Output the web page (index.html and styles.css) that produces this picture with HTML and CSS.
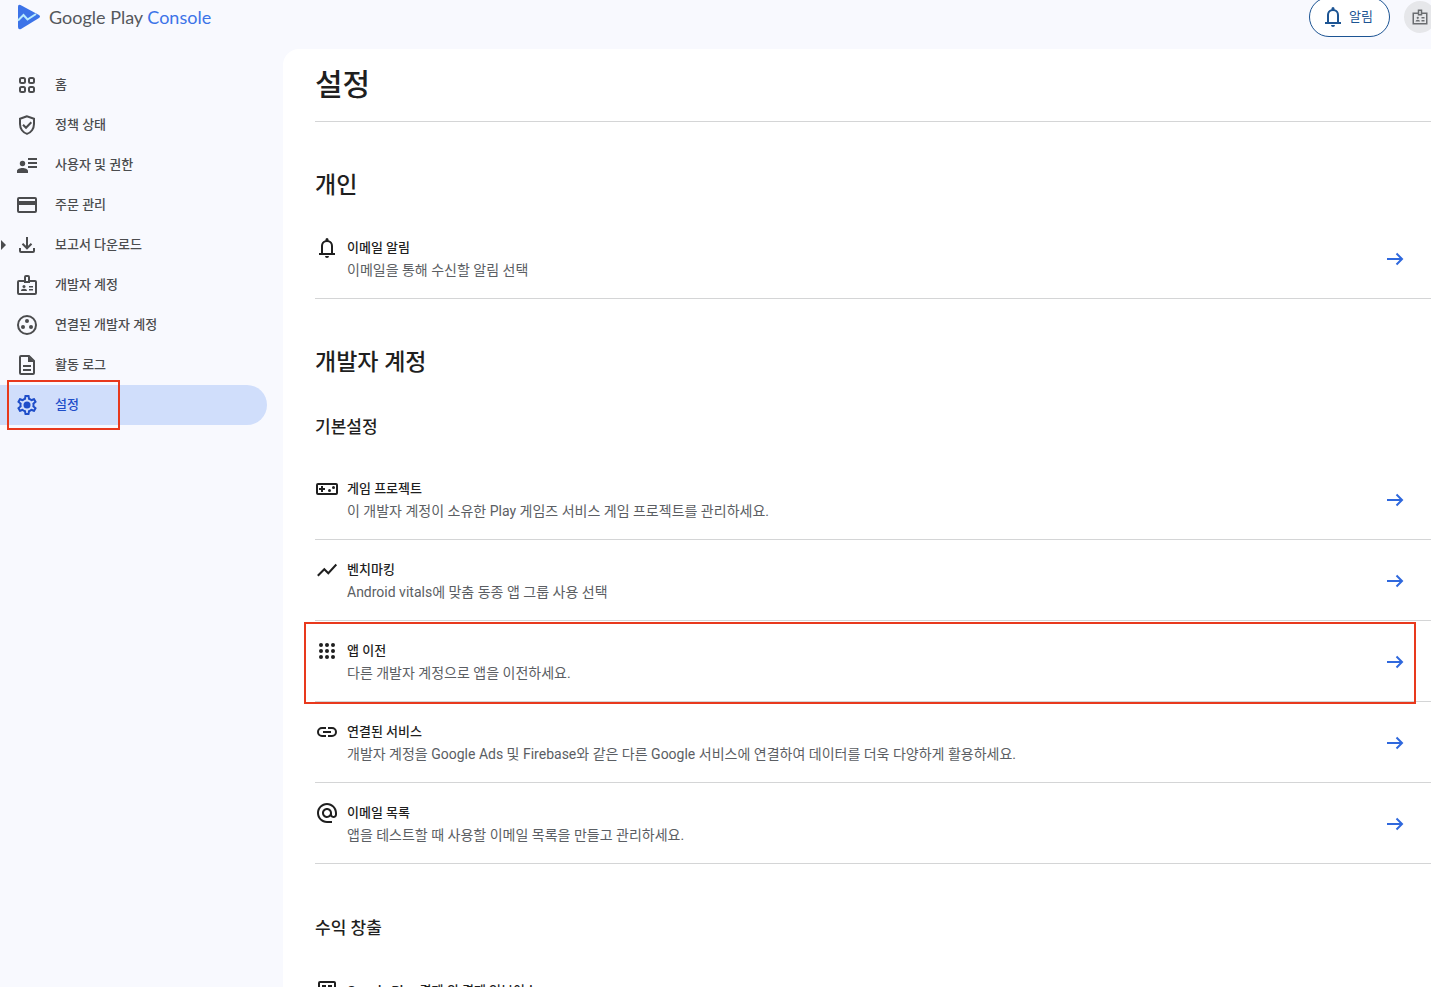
FILE: index.html
```
<!DOCTYPE html>
<html lang="ko">
<head>
  <meta charset="UTF-8">
  <title>설정 | Google Play Console</title>
  <meta name="viewport" content="width=device-width, initial-scale=1.0">
  <link rel="stylesheet" href="styles.css">
</head>
<body>

<header class="topbar">
  <a class="logo" href="#">
    <svg class="logo-mark" viewBox="0 0 24 26">
      <path fill="#3c73e8" d="M1 2.500Q1 0 3.500 1L22 11Q24 12.500 22 14L4 25Q1 26 1 23z"/>
      <path fill="none" stroke="#b9ecfd" stroke-width="2" d="M1 16.500 6.500 11l4 4.500L19 10"/>
    </svg>
    <span class="logo-text">Google Play <span class="logo-console">Console</span></span>
  </a>
  <div class="topbar-actions">
    <button class="alert-button" type="button">
      <svg class="icon" viewBox="0 0 24 24"><path d="M4 19v-2h2v-7c0-2.800 1.700-5.100 4.500-5.800V3.500a1.500 1.500 0 0 1 3 0v.7C16.300 4.900 18 7.200 18 10v7h2v2zm4-2h8v-7a4 4 0 0 0-8 0zM10 20h4a2 2 0 0 1-4 0z"/></svg>
      알림
    </button>
    <button class="avatar" type="button" aria-label="계정">
      <svg viewBox="0 0 24 24"><path class="line" d="M9 7H3v14h18V7h-6M10 3h4v6h-4zM14 13h4M14 17h4"/><circle cx="9" cy="13" r="1.500"/><path d="M6 18q0-2.500 3-2.500t3 2.500z"/></svg>
    </button>
  </div>
</header>

<div class="layout">
  <nav class="sidebar">
    <a class="nav-item" href="#">
      <svg class="icon" viewBox="0 0 24 24"><g class="line"><rect x="5" y="5" width="5" height="5" rx="1.500"/><rect x="14" y="5" width="5" height="5" rx="1.500"/><rect x="5" y="14" width="5" height="5" rx="1.500"/><rect x="14" y="14" width="5" height="5" rx="1.500"/></g></svg>
      홈
    </a>
    <a class="nav-item" href="#">
      <svg class="icon" viewBox="0 0 24 24"><path class="line" d="M12 3.200 5 5.800v5.300c0 4.500 2.900 8.600 7 9.800 4.100-1.200 7-5.300 7-9.800V5.800zM8 11.800l3 3 5.300-5.500"/></svg>
      정책 상태
    </a>
    <a class="nav-item" href="#">
      <svg class="icon" viewBox="0 0 24 24"><circle cx="7.500" cy="10.500" r="2.700"/><path d="M2 20v-2c0-2 3-3 5.500-3s5.500 1 5.500 3v2zM13 5h9v2h-9zM13 9h9v2h-9zM13 13h9v2h-9z"/></svg>
      사용자 및 권한
    </a>
    <a class="nav-item" href="#">
      <svg class="icon" viewBox="0 0 24 24"><rect class="line" x="3" y="5" width="18" height="14" rx="1"/><path d="M3 8h18v4H3z"/></svg>
      주문 관리
    </a>
    <a class="nav-item expandable" href="#">
      <svg class="icon" viewBox="0 0 24 24"><path class="line" d="M12 4v11M7.500 10.800l4.500 4.500 4.500-4.500M5 15v3q0 1 1 1h12q1 0 1-1v-3"/></svg>
      보고서 다운로드
    </a>
    <a class="nav-item" href="#">
      <svg class="icon" viewBox="0 0 24 24"><path class="line" d="M9 8H4q-1 0-1 1v11q0 1 1 1h16q1 0 1-1V9q0-1-1-1h-5M10 4q0-1 1-1h2q1 0 1 1v5h-4z"/><circle cx="9" cy="13.500" r="1.500"/><path d="M6 18q0-2.300 3-2.300t3 2.300zM14 13h4v1.500h-4zM14 16h4v1.500h-4z"/></svg>
      개발자 계정
    </a>
    <a class="nav-item" href="#">
      <svg class="icon" viewBox="0 0 24 24"><circle class="line" cx="12" cy="12" r="9"/><circle cx="12" cy="8" r="2"/><circle cx="8" cy="14" r="2"/><circle cx="16" cy="14" r="2"/></svg>
      연결된 개발자 계정
    </a>
    <a class="nav-item" href="#">
      <svg class="icon" viewBox="0 0 24 24"><path class="line" d="M14 3H6Q5 3 5 4v16q0 1 1 1h12q1 0 1-1V8zM8 13h8M8 17h8"/><path d="M13 3v6h6z"/></svg>
      활동 로그
    </a>
    <a class="nav-item active marked" href="#" aria-current="page">
      <svg class="icon" viewBox="0 0 24 24"><path d="M19.430 12.980c.04-.32.07-.64.07-.98 0-.34-.03-.66-.07-.98l2.110-1.650c.19-.15.24-.42.12-.64l-2-3.460c-.09-.16-.26-.25-.44-.25-.06 0-.12.010-.17.030l-2.490 1c-.52-.4-1.080-.73-1.690-.98l-.38-2.650C14.460 2.180 14.250 2 14 2h-4c-.25 0-.46.18-.49.42l-.38 2.650c-.61.25-1.170.59-1.690.98l-2.490-1c-.06-.02-.12-.03-.18-.03-.17 0-.34.09-.43.25l-2 3.460c-.13.22-.07.49.12.64l2.110 1.650c-.04.32-.07.65-.07.98 0 .33.03.66.07.98l-2.110 1.650c-.19.15-.24.42-.12.64l2 3.460c.09.16.26.25.44.25.06 0 .12-.01.17-.03l2.490-1c.52.4 1.080.73 1.690.98l.38 2.650c.03.24.24.42.49.42h4c.25 0 .46-.18.49-.42l.38-2.650c.61-.25 1.170-.59 1.690-.98l2.490 1c.06.02.12.03.18.03.17 0 .34-.09.43-.25l2-3.460c.12-.22.07-.49-.12-.64zM17.450 11.270c.04.31.05.52.05.73 0 .21-.02.43-.05.73l-.14 1.130.89.7 1.080.84-.7 1.210-1.270-.51-1.040-.42-.9.68c-.43.32-.84.56-1.250.73l-1.060.43-.16 1.130-.2 1.350h-1.400l-.19-1.350-.16-1.130-1.060-.43c-.43-.18-.83-.41-1.230-.71l-.91-.7-1.060.43-1.270.51-.7-1.210 1.080-.84.89-.7-.14-1.130c-.03-.31-.05-.54-.05-.74s.02-.43.05-.73l.14-1.130-.89-.7-1.080-.84.7-1.210 1.270.51 1.040.42.9-.68c.43-.32.84-.56 1.250-.73l1.060-.43.16-1.130.2-1.350h1.390l.19 1.350.16 1.130 1.060.43c.43.18.83.41 1.230.71l.91.7 1.060-.43 1.270-.51.7 1.210-1.070.85-.89.7z" fill-rule="evenodd"/><circle cx="12" cy="12" r="3.500"/></svg>
      설정
    </a>
  </nav>

  <main class="content">
    <h1>설정</h1>

    <section>
      <h2>개인</h2>
      <a class="row" href="#">
        <svg class="icon" viewBox="0 0 24 24"><path d="M4 19v-2h2v-7c0-2.800 1.700-5.100 4.500-5.800V3.500a1.500 1.500 0 0 1 3 0v.7C16.300 4.900 18 7.200 18 10v7h2v2zm4-2h8v-7a4 4 0 0 0-8 0zM10 20h4a2 2 0 0 1-4 0z"/></svg>
        <span class="row-text">
          <span class="row-title">이메일 알림</span>
          <span class="row-desc">이메일을 통해 수신할 알림 선택</span>
        </span>
        <svg class="icon arrow" viewBox="0 0 24 24"><path class="line" d="M4 12h15M13.500 6.500 19 12l-5.500 5.500"/></svg>
      </a>
    </section>

    <section>
      <h2>개발자 계정</h2>
      <h3>기본설정</h3>
      <a class="row" href="#">
        <svg class="icon" viewBox="0 0 24 24"><rect class="line" x="2" y="7" width="20" height="10" rx="1"/><path d="M6 9h2v2h2v2H8v2H6v-2H4v-2h2z"/><circle cx="14.500" cy="13.500" r="1.500"/><circle cx="18.500" cy="10.500" r="1.500"/></svg>
        <span class="row-text">
          <span class="row-title">게임 프로젝트</span>
          <span class="row-desc">이 개발자 계정이 소유한 Play 게임즈 서비스 게임 프로젝트를 관리하세요.</span>
        </span>
        <svg class="icon arrow" viewBox="0 0 24 24"><path class="line" d="M4 12h15M13.500 6.500 19 12l-5.500 5.500"/></svg>
      </a>
      <a class="row" href="#">
        <svg class="icon" viewBox="0 0 24 24"><path class="line" d="M2.800 17.700 9.300 11.200l4 4L21.300 6.500"/></svg>
        <span class="row-text">
          <span class="row-title">벤치마킹</span>
          <span class="row-desc">Android vitals에 맞춤 동종 앱 그룹 사용 선택</span>
        </span>
        <svg class="icon arrow" viewBox="0 0 24 24"><path class="line" d="M4 12h15M13.500 6.500 19 12l-5.500 5.500"/></svg>
      </a>
      <a class="row marked" href="#">
        <svg class="icon" viewBox="0 0 24 24"><circle cx="6" cy="6" r="2"/><circle cx="12" cy="6" r="2"/><circle cx="18" cy="6" r="2"/><circle cx="6" cy="12" r="2"/><circle cx="12" cy="12" r="2"/><circle cx="18" cy="12" r="2"/><circle cx="6" cy="18" r="2"/><circle cx="12" cy="18" r="2"/><circle cx="18" cy="18" r="2"/></svg>
        <span class="row-text">
          <span class="row-title">앱 이전</span>
          <span class="row-desc">다른 개발자 계정으로 앱을 이전하세요.</span>
        </span>
        <svg class="icon arrow" viewBox="0 0 24 24"><path class="line" d="M4 12h15M13.500 6.500 19 12l-5.500 5.500"/></svg>
      </a>
      <a class="row" href="#">
        <svg class="icon" viewBox="0 0 24 24"><path class="line" d="M11 8H7a4 4 0 0 0 0 8h4M13 8h4a4 4 0 0 1 0 8h-4M8 12h8"/></svg>
        <span class="row-text">
          <span class="row-title">연결된 서비스</span>
          <span class="row-desc">개발자 계정을 Google Ads 및 Firebase와 같은 다른 Google 서비스에 연결하여 데이터를 더욱 다양하게 활용하세요.</span>
        </span>
        <svg class="icon arrow" viewBox="0 0 24 24"><path class="line" d="M4 12h15M13.500 6.500 19 12l-5.500 5.500"/></svg>
      </a>
      <a class="row" href="#">
        <svg class="icon" viewBox="0 0 24 24"><path d="M12 2C6.480 2 2 6.480 2 12s4.480 10 10 10h5v-2h-5c-4.340 0-8-3.660-8-8s3.660-8 8-8 8 3.660 8 8v1.430c0 .79-.71 1.570-1.500 1.570s-1.500-.78-1.500-1.570V12c0-2.760-2.240-5-5-5s-5 2.240-5 5 2.240 5 5 5c1.380 0 2.640-.56 3.540-1.470.65.89 1.770 1.470 2.960 1.470 1.970 0 3.500-1.600 3.500-3.570V12c0-5.520-4.480-10-10-10zm0 13c-1.660 0-3-1.340-3-3s1.340-3 3-3 3 1.340 3 3-1.340 3-3 3z"/></svg>
        <span class="row-text">
          <span class="row-title">이메일 목록</span>
          <span class="row-desc">앱을 테스트할 때 사용할 이메일 목록을 만들고 관리하세요.</span>
        </span>
        <svg class="icon arrow" viewBox="0 0 24 24"><path class="line" d="M4 12h15M13.500 6.500 19 12l-5.500 5.500"/></svg>
      </a>

      <h3>수익 창출</h3>
      <a class="row" href="#">
        <svg class="icon" viewBox="0 0 24 24"><path class="line" d="M4 22V5q0-1 1-1h14q1 0 1 1v17z"/><path d="M7 7h4v2H7zM13 7h4v2h-4z"/></svg>
        <span class="row-text">
          <span class="row-title">Google Play 결제 외 결제 인보이스</span>
        </span>
      </a>
    </section>
  </main>
</div>

</body>
</html>
```
FILE: styles.css
```
*,
*::before,
*::after {
  box-sizing: border-box;
}
body {
  margin: 0;
  height: 100vh;
  display: flex;
  flex-direction: column;
  overflow: hidden;
  background: #f8f9fe;
  color: #1f1f1f;
  font-family: Roboto, 'Noto Sans CJK KR', sans-serif;
  font-size: 13px;
  line-height: 22px;
}
a {
  color: inherit;
  text-decoration: none;
}
.icon {
  width: 24px;
  height: 24px;
  flex-shrink: 0;
}
svg {
  fill: currentColor;
}
.line {
  fill: none;
  stroke: currentColor;
  stroke-width: 2;
}

.topbar {
  flex-shrink: 0;
  display: flex;
  align-items: center;
  justify-content: space-between;
  height: 64px;
  margin-top: -15px;
  margin-right: -5px;
  padding-left: 17px;
}
.logo {
  display: flex;
  align-items: center;
  gap: 8px;
}
.logo-mark {
  width: 24px;
  height: 26px;
}
.logo-text {
  font-family: Lato, sans-serif;
  font-size: 18px;
  color: #55585c;
}
.logo-console {
  color: #3c73e8;
}
.topbar-actions {
  display: flex;
  align-items: center;
  gap: 14px;
}
.alert-button {
  display: flex;
  align-items: center;
  gap: 4px;
  height: 40px;
  padding: 0 16px 0 11px;
  border: 1px solid #1c5493;
  border-radius: 20px;
  background: #fff;
  color: #1c5493;
  font: inherit;
}
.avatar {
  display: flex;
  align-items: center;
  justify-content: center;
  width: 32px;
  height: 32px;
  padding: 0;
  border: none;
  border-radius: 50%;
  background: #e6e7ea;
  color: #6a6d70;
}
.avatar svg {
  width: 18px;
  height: 18px;
}

.layout {
  flex: 1;
  display: flex;
  min-height: 0;
}
.sidebar {
  width: 283px;
  flex-shrink: 0;
  padding: 16px 16px 0 0;
  color: #4b4c4e;
  font-weight: 500;
}
.nav-item {
  position: relative;
  display: flex;
  align-items: center;
  gap: 16px;
  height: 40px;
  padding-left: 15px;
  border-radius: 0 20px 20px 0;
}
.nav-item.active {
  background: #d0defb;
  color: #1f4ec9;
}
.expandable::before {
  content: '';
  position: absolute;
  left: 1px;
  top: 15px;
  border: 5px solid transparent;
  border-left-color: #4b4c4e;
  border-right: none;
}

.content {
  flex: 1;
  min-width: 0;
  padding: 16px 0 0 32px;
  overflow: hidden;
  background: #fff;
  border-radius: 16px 0 0 0;
}
h1, h2, h3 {
  margin: 0;
  font-weight: 500;
}
h1 {
  padding-bottom: 16px;
  border-bottom: 1px solid #d4d5d6;
  font-size: 30px;
  line-height: 40px;
}
h2 {
  padding: 50px 0 18px;
  font-size: 23px;
  line-height: 28px;
}
h3 {
  padding: 52px 0 20px;
  font-size: 17px;
  line-height: 24px;
}
h2 + h3 {
  padding-top: 20px;
}
.row {
  position: relative;
  display: flex;
  align-items: center;
  gap: 8px;
  padding: 18px 24px 17px 0;
  border-bottom: 1px solid #d4d5d6;
}
.row .icon {
  align-self: flex-start;
}
.row .arrow {
  align-self: center;
  color: #2f68dd;
}
.row-text {
  flex: 1;
  padding-top: 1px;
}
.row-title,
.row-desc {
  display: block;
}
.row-title {
  font-weight: 500;
}
.row-desc {
  font-size: 14px;
  color: #5b5e63;
}

/* red highlight frames */
.marked::after {
  content: '';
  position: absolute;
  border: 2px solid #e8391d;
}
.nav-item.marked::after {
  left: 7px;
  top: -5px;
  width: 113px;
  height: 50px;
}
.row.marked::after {
  left: -11px;
  right: 15px;
  top: 1px;
  bottom: -3px;
}
```
